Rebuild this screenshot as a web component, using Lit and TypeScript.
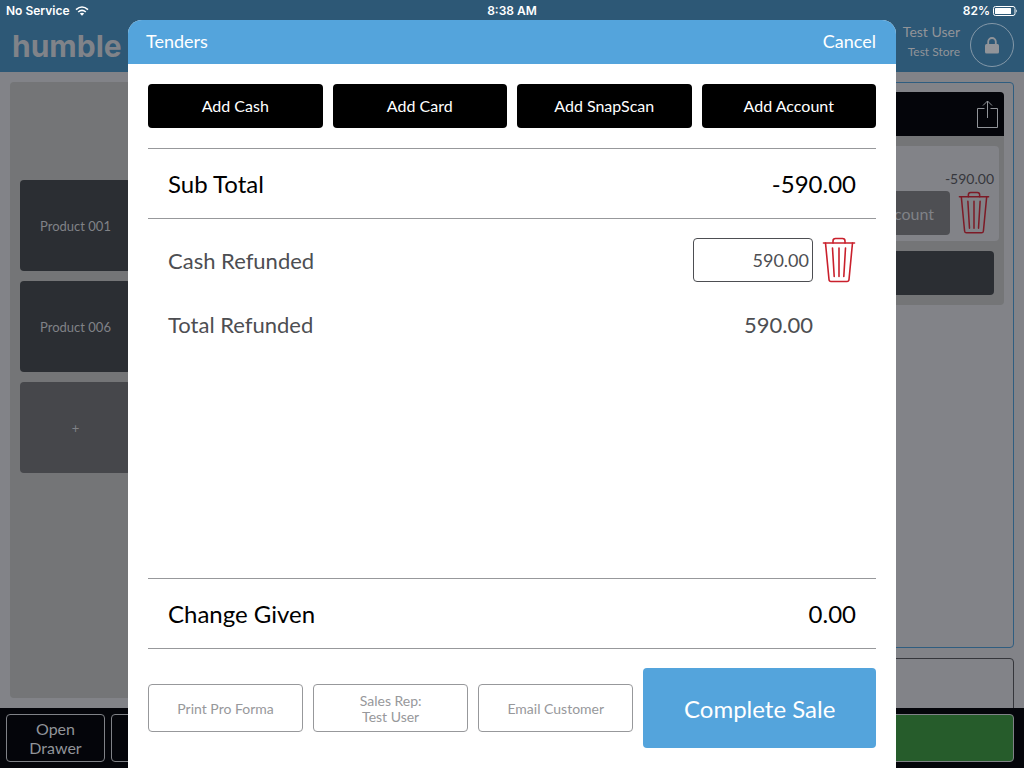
import { LitElement, html, css, svg } from "lit";
import { customElement } from "lit/decorators.js";

const trashIcon = html`<svg viewBox="0 0 34 46" aria-hidden="true">
  ${svg`<g fill="none" stroke="currentColor" stroke-width="1.6" stroke-linejoin="round" stroke-linecap="round">
    <path d="M1.500 6H32.500" />
    <path d="M11 6V4Q11 1.500 13.500 1.500H20.500Q23 1.500 23 4V6" />
    <path d="M3.500 6L7 42.500Q7.200 44.500 9 44.500H25Q26.800 44.500 27 42.500L30.500 6" />
    <path d="M10.500 11L12.200 39.500M17 11V39.500M23.500 11L21.800 39.500" />
  </g>`}
</svg>`;

@customElement("trash-button")
class TrashButton extends LitElement {
  static styles = css`
    :host { display: block; }
    button {
      display: block; width: 100%; padding: 0; border: 0;
      background: none; color: inherit;
    }
    svg { display: block; width: 100%; }
  `;
  render() {
    return html`<button type="button" aria-label="Remove">${trashIcon}</button>`;
  }
}

@customElement("status-bar")
class StatusBar extends LitElement {
  static styles = css`
    :host {
      display: grid; grid-template-columns: 1fr auto 1fr; align-items: center;
      height: 20px; padding: 1px 6px 0; box-sizing: border-box;
      font: 600 12px/20px Inter, sans-serif; color: #fff;
    }
    .side { display: flex; align-items: center; gap: 5px; }
    .end { justify-content: flex-end; gap: 3px; }
    svg { display: block; }
  `;
  render() {
    return html`
      <div class="side">
        <span>No Service</span>
        <svg width="14" height="10" viewBox="0 0 14 10" aria-hidden="true">
          <g fill="none" stroke="#fff" stroke-width="1.600">
            <path d="M1 3.700Q7 -1.700 13 3.700" />
            <path d="M3.200 6Q7 2.600 10.800 6" />
          </g>
          <path d="M4.800 7.500Q7 5.800 9.200 7.500L7 9.800Z" fill="#fff" />
        </svg>
      </div>
      <span>8:38 AM</span>
      <div class="side end">
        <span>82%</span>
        <svg width="25" height="10" viewBox="0 0 25 10" aria-hidden="true">
          <rect x="0.500" y="0.500" width="21.500" height="9" rx="2" fill="none" stroke="#fff" />
          <rect x="2" y="2" width="16" height="6" rx="0.500" fill="#fff" />
          <path d="M23 3.200Q24.800 5 23 6.800Z" fill="#fff" />
        </svg>
      </div>
    `;
  }
}

@customElement("pos-screen")
class PosScreen extends LitElement {
  static styles = css`
    :host {
      display: flex; flex-direction: column; height: 100%;
      background: #828388; color: #919499;
    }
    * { box-sizing: border-box; }
    button { font: inherit; color: inherit; }
    .top { background: #2d5876; height: 72px; }
    .brandbar {
      display: flex; justify-content: space-between; align-items: center;
      padding: 0 10px 0 12px; height: 50px;
    }
    .brand { font: 700 30px/50px Inter, sans-serif; color: #808389; padding-top: 2px; }
    .account { display: flex; align-items: center; gap: 10px; text-align: right; }
    .user { font-size: 14px; line-height: 22px; }
    .store { font-size: 12px; line-height: 18px; }
    .names { padding-bottom: 8px; }
    .lock {
      display: grid; place-items: center; width: 44px; height: 44px; padding: 0;
      border: 1px solid #8498a8; border-radius: 50%; background: none;
    }
    .main {
      flex: 1; min-height: 0; overflow: hidden; display: grid;
      grid-template-columns: 1fr 1fr; grid-template-rows: minmax(0, 1fr);
      gap: 10px; padding: 10px 10px 0;
    }
    .catalog {
      background: #747577; border-radius: 4px; margin-bottom: 10px;
      padding: 98px 10px 0; display: grid; align-content: start;
      grid-template-columns: 111px; gap: 10px;
    }
    .tile {
      height: 91px; border: 0; border-radius: 4px; background: #2b2e33;
      font-size: 13px; color: #808287;
    }
    .add { background: #46474b; }
    .sale {
      display: grid; grid-template-rows: 566px 56px; gap: 10px;
    }
    .cart { border: 1px solid #2f5d80; border-radius: 4px; padding: 9px; }
    .note { border: 1px solid #35363b; border-radius: 4px; }
    .carthead {
      background: #04050a; height: 44px; border-radius: 4px 4px 0 0;
      display: flex; justify-content: flex-end; align-items: center; padding-right: 6px;
    }
    .cartbody {
      background: #747577; border-radius: 0 0 4px 4px; padding: 10px 5px;
      display: flex; flex-direction: column; gap: 10px;
    }
    .line {
      background: #828388; border-radius: 4px; height: 95px; padding: 20px 5px 0;
    }
    .amount { font-size: 14px; line-height: 25px; text-align: right; color: #36373c; }
    .lineactions { display: flex; justify-content: flex-end; gap: 8px; }
    .discount {
      height: 44px; padding: 0 16px; border: 0; border-radius: 4px;
      background: #4e4f53; color: #808287; font-size: 16px;
    }
    trash-button { width: 32px; margin-right: 4px; color: #7d1a26; }
    .total { height: 44px; background: #2b2e33; border-radius: 4px; margin: 0 5px 0; }
    .bottom {
      background: #04050a; height: 60px; display: flex; gap: 6px; padding: 6px 10px 6px 6px;
    }
    .tool {
      width: 99px; border: 1px solid #808287; border-radius: 4px; background: none;
      font-size: 16px; line-height: 19px; padding: 0 14px;
    }
    .pay { flex: 1; border: 1px solid #808287; border-radius: 4px; background: #265c2b; }
    svg { display: block; }
  `;
  render() {
    return html`
      <header class="top">
        <status-bar></status-bar>
        <div class="brandbar">
          <div class="brand">humble</div>
          <div class="account">
            <div class="names">
              <div class="user">Test User</div>
              <div class="store">Test Store</div>
            </div>
            <button class="lock" type="button" aria-label="Lock">
              <svg width="14" height="17" viewBox="0 0 14 17" aria-hidden="true">
                <path d="M3.200 8V4.800a3.800 3.800 0 0 1 7.600 0V8" fill="none" stroke="#919499" stroke-width="1.800" />
                <rect x="0" y="7" width="14" height="9.500" rx="1.500" fill="#919499" />
              </svg>
            </button>
          </div>
        </div>
      </header>
      <main class="main">
        <section class="catalog">
          ${["Product 001", "Product 006"].map(
            (name) => html`<button class="tile" type="button">${name}</button>`
          )}
          <button class="tile add" type="button">+</button>
        </section>
        <section class="sale">
          <div class="cart">
            <div class="carthead">
              <svg width="21" height="28" viewBox="0 0 21 28" aria-hidden="true">
                <g fill="none" stroke="#919499">
                  <path d="M7.500 8.500H0.500V27.500H20.500V8.500H13.500" />
                  <path d="M10.500 18V1M6 5.500L10.500 1L15 5.500" />
                </g>
              </svg>
            </div>
            <div class="cartbody">
              <div class="line">
                <div class="amount">-590.00</div>
                <div class="lineactions">
                  <button class="discount" type="button">Discount</button>
                  <trash-button></trash-button>
                </div>
              </div>
              <div class="total"></div>
            </div>
          </div>
          <div class="note"></div>
        </section>
      </main>
      <footer class="bottom">
        <button class="tool" type="button">Open Drawer</button>
        <button class="tool" type="button">Park Sale</button>
        <button class="pay" type="button" aria-label="Pay"></button>
      </footer>
    `;
  }
}

@customElement("tenders-dialog")
class TendersDialog extends LitElement {
  static styles = css`
    :host {
      display: flex; flex-direction: column; background: #fff;
      border-radius: 14px 14px 0 0; overflow: hidden; color: #4d4e52;
    }
    * { box-sizing: border-box; }
    button { font: inherit; padding: 0; border: 0; border-radius: 4px; }
    .title {
      display: flex; justify-content: space-between; align-items: center;
      height: 44px; padding: 0 20px 2px 18px; background: #54a4dc; color: #fff;
    }
    h1 { font-size: 18px; font-weight: 400; margin: 0; }
    .cancel { background: none; color: #fff; font-size: 18px; }
    .content { flex: 1; display: flex; flex-direction: column; padding: 20px; }
    .adders { display: grid; grid-template-columns: repeat(4, 1fr); gap: 10px; padding-bottom: 20px; }
    .adder { height: 44px; padding-bottom: 2px; background: #000; color: #fff; font-size: 16px; }
    .summary {
      display: flex; justify-content: space-between; align-items: center;
      height: 71px; padding: 0 20px; border: solid #97989b; border-width: 1px 0;
      font-size: 24px; color: #000;
    }
    .list { flex: 1; padding: 19px 20px 0; font-size: 22px; }
    .entry { display: flex; align-items: center; height: 44px; margin-bottom: 20px; }
    .label { flex: 1; }
    .box {
      width: 120px; height: 44px; border: 1px solid #4d4e52; border-radius: 4px;
      padding: 0 3px; text-align: right; font: inherit; font-size: 18px; color: inherit;
      background: #fff;
    }
    trash-button { width: 34px; margin-left: 9px; color: #c9202c; }
    .sum { margin-right: 43px; }
    .actions {
      display: grid; grid-template-columns: 2fr 2fr 2fr 3fr; align-items: center;
      gap: 10px; padding-top: 19px;
    }
    .minor {
      height: 48px; border: 1px solid #97989b; background: #fff;
      color: #97989b; font-size: 14px; line-height: 16px; padding-top: 2px;
    }
    .complete { height: 80px; background: #54a4dc; color: #fff; font-size: 24px; }
  `;
  render() {
    return html`
      <header class="title">
        <h1>Tenders</h1>
        <button class="cancel" type="button">Cancel</button>
      </header>
      <div class="content">
        <div class="adders">
          ${["Cash", "Card", "SnapScan", "Account"].map(
            (kind) => html`<button class="adder" type="button">Add ${kind}</button>`
          )}
        </div>
        <div class="summary"><span>Sub Total</span><span>-590.00</span></div>
        <div class="list">
          <div class="entry">
            <label class="label" for="cash">Cash Refunded</label>
            <input class="box" id="cash" type="text" inputmode="decimal" value="590.00" />
            <trash-button></trash-button>
          </div>
          <div class="entry">
            <span class="label">Total Refunded</span>
            <span class="sum">590.00</span>
          </div>
        </div>
        <div class="summary"><span>Change Given</span><span>0.00</span></div>
        <div class="actions">
          <button class="minor" type="button">Print Pro Forma</button>
          <button class="minor" type="button">Sales Rep:<br />Test User</button>
          <button class="minor" type="button">Email Customer</button>
          <button class="complete" type="button">Complete Sale</button>
        </div>
      </div>
    `;
  }
}

@customElement("app-root")
class AppRoot extends LitElement {
  static styles = css`
    :host {
      display: block; position: relative; height: 100vh; overflow: hidden;
      font-family: Lato, sans-serif;
    }
    .dialog { position: absolute; inset: 20px 12.5% 0; }
  `;
  render() {
    return html`
      <pos-screen></pos-screen>
      <tenders-dialog class="dialog" role="dialog" aria-label="Tenders"></tenders-dialog>
    `;
  }
}
